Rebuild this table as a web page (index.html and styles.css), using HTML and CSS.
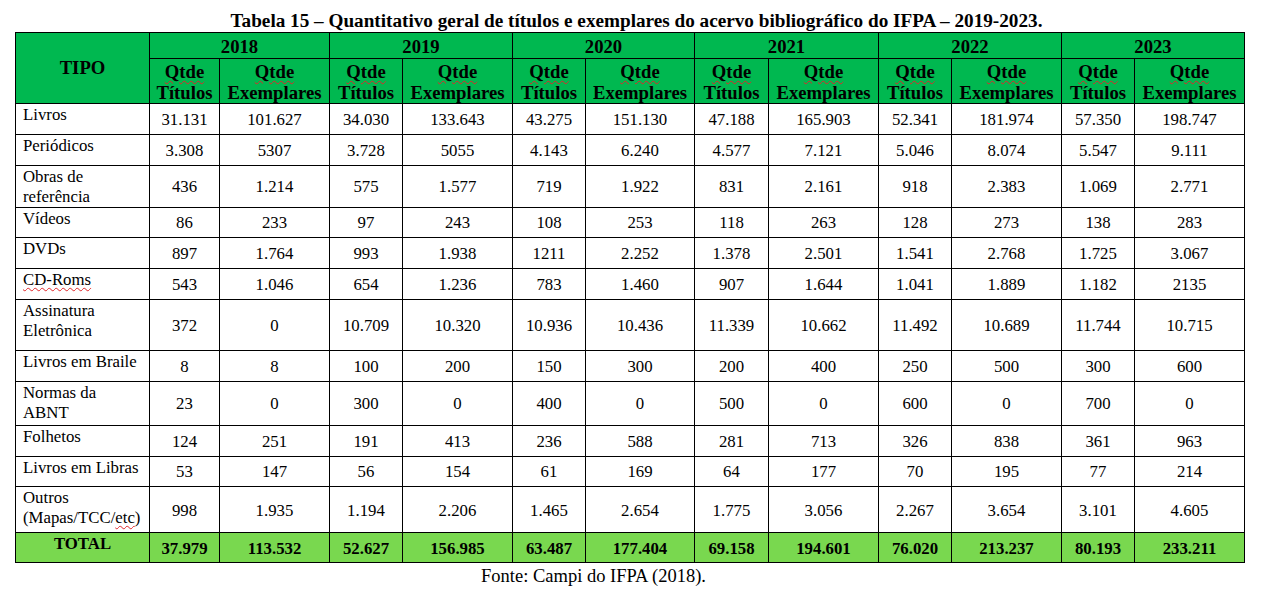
FILE: index.html
```html
<!DOCTYPE html>
<html lang="pt-BR">
<head>
<meta charset="utf-8">
<title>Tabela 15</title>
<link rel="stylesheet" href="styles.css">
</head>
<body>
<div class="page">
  <p class="caption">Tabela 15 – Quantitativo geral de títulos e exemplares do acervo bibliográfico do IFPA – 2019-2023.</p>
  <table class="data">
    <colgroup>
      <col class="c-tipo">
      <col class="c70"><col class="c110">
      <col class="c73"><col class="c110">
      <col class="c73"><col class="c109">
      <col class="c74"><col class="c110">
      <col class="c73"><col class="c110">
      <col class="c73"><col class="c110">
    </colgroup>
    <thead>
      <tr class="h-year">
        <th rowspan="2" class="tipo">TIPO</th>
        <th colspan="2">2018</th>
        <th colspan="2">2019</th>
        <th colspan="2">2020</th>
        <th colspan="2">2021</th>
        <th colspan="2">2022</th>
        <th colspan="2">2023</th>
      </tr>
      <tr class="h-sub">
        <th><span class="sp">Qtde</span><br>Títulos</th><th><span class="sp">Qtde</span><br>Exemplares</th>
        <th><span class="sp">Qtde</span><br>Títulos</th><th><span class="sp">Qtde</span><br>Exemplares</th>
        <th><span class="sp">Qtde</span><br>Títulos</th><th><span class="sp">Qtde</span><br>Exemplares</th>
        <th><span class="sp">Qtde</span><br>Títulos</th><th><span class="sp">Qtde</span><br>Exemplares</th>
        <th><span class="sp">Qtde</span><br>Títulos</th><th><span class="sp">Qtde</span><br>Exemplares</th>
        <th><span class="sp">Qtde</span><br>Títulos</th><th><span class="sp">Qtde</span><br>Exemplares</th>
      </tr>
    </thead>
    <tbody>
      <tr class="h31">
        <td class="name">Livros</td>
        <td>31.131</td><td>101.627</td><td>34.030</td><td>133.643</td><td>43.275</td><td>151.130</td><td>47.188</td><td>165.903</td><td>52.341</td><td>181.974</td><td>57.350</td><td>198.747</td>
      </tr>
      <tr class="h31">
        <td class="name">Periódicos</td>
        <td>3.308</td><td>5307</td><td>3.728</td><td>5055</td><td>4.143</td><td>6.240</td><td>4.577</td><td>7.121</td><td>5.046</td><td>8.074</td><td>5.547</td><td>9.111</td>
      </tr>
      <tr class="h40">
        <td class="name">Obras de referência</td>
        <td>436</td><td>1.214</td><td>575</td><td>1.577</td><td>719</td><td>1.922</td><td>831</td><td>2.161</td><td>918</td><td>2.383</td><td>1.069</td><td>2.771</td>
      </tr>
      <tr class="h31">
        <td class="name">Vídeos</td>
        <td>86</td><td>233</td><td>97</td><td>243</td><td>108</td><td>253</td><td>118</td><td>263</td><td>128</td><td>273</td><td>138</td><td>283</td>
      </tr>
      <tr class="h31">
        <td class="name">DVDs</td>
        <td>897</td><td>1.764</td><td>993</td><td>1.938</td><td>1211</td><td>2.252</td><td>1.378</td><td>2.501</td><td>1.541</td><td>2.768</td><td>1.725</td><td>3.067</td>
      </tr>
      <tr class="h31">
        <td class="name"><span class="sp">CD-Roms</span></td>
        <td>543</td><td>1.046</td><td>654</td><td>1.236</td><td>783</td><td>1.460</td><td>907</td><td>1.644</td><td>1.041</td><td>1.889</td><td>1.182</td><td>2135</td>
      </tr>
      <tr class="h51">
        <td class="name">Assinatura Eletrônica</td>
        <td>372</td><td>0</td><td>10.709</td><td>10.320</td><td>10.936</td><td>10.436</td><td>11.339</td><td>10.662</td><td>11.492</td><td>10.689</td><td>11.744</td><td>10.715</td>
      </tr>
      <tr class="h31">
        <td class="name">Livros em Braile</td>
        <td>8</td><td>8</td><td>100</td><td>200</td><td>150</td><td>300</td><td>200</td><td>400</td><td>250</td><td>500</td><td>300</td><td>600</td>
      </tr>
      <tr class="h44">
        <td class="name">Normas da ABNT</td>
        <td>23</td><td>0</td><td>300</td><td>0</td><td>400</td><td>0</td><td>500</td><td>0</td><td>600</td><td>0</td><td>700</td><td>0</td>
      </tr>
      <tr class="h31">
        <td class="name">Folhetos</td>
        <td>124</td><td>251</td><td>191</td><td>413</td><td>236</td><td>588</td><td>281</td><td>713</td><td>326</td><td>838</td><td>361</td><td>963</td>
      </tr>
      <tr class="h31">
        <td class="name">Livros em Libras</td>
        <td>53</td><td>147</td><td>56</td><td>154</td><td>61</td><td>169</td><td>64</td><td>177</td><td>70</td><td>195</td><td>77</td><td>214</td>
      </tr>
      <tr class="h46">
        <td class="name">Outros (Mapas/TCC/<span class="sp">etc</span>)</td>
        <td>998</td><td>1.935</td><td>1.194</td><td>2.206</td><td>1.465</td><td>2.654</td><td>1.775</td><td>3.056</td><td>2.267</td><td>3.654</td><td>3.101</td><td>4.605</td>
      </tr>
      <tr class="total h30">
        <td class="name">TOTAL</td>
        <td>37.979</td><td>113.532</td><td>52.627</td><td>156.985</td><td>63.487</td><td>177.404</td><td>69.158</td><td>194.601</td><td>76.020</td><td>213.237</td><td>80.193</td><td>233.211</td>
      </tr>
    </tbody>
  </table>
  <p class="source">Fonte: Campi do IFPA (2018).</p>
</div>
</body>
</html>
```
FILE: styles.css
```css
html, body {
  margin: 0;
  padding: 0;
  background: #ffffff;
}

body {
  font-family: "Liberation Serif", "Times New Roman", serif;
  color: #000000;
}

.page {
  padding: 0 0 0 15px;
}

.caption {
  margin: 0;
  height: 32px;
  padding: 10px 0 0 14px;
  box-sizing: border-box;
  width: 1229px;
  text-align: center;
  font-weight: bold;
  font-size: 19.2px;
  line-height: 21px;
}

.data {
  border-collapse: collapse;
  table-layout: fixed;
  width: 1229px;
}

.c-tipo { width: 134px; }
.c70 { width: 70px; }
.c73 { width: 73px; }
.c74 { width: 74px; }
.c109 { width: 109px; }
.c110 { width: 110px; }

.data th,
.data td {
  border: 1px solid #000000;
  padding: 0;
  text-align: center;
  white-space: nowrap;
}

.data thead th {
  background: #00b850;
  font-weight: bold;
  font-size: 18.7px;
  line-height: 21px;
  vertical-align: middle;
}

.h-year th {
  height: 24px;
  padding-top: 1px;
}

.h-sub th {
  height: 42px;
  padding-top: 2px;
}

.data thead th.tipo {
  vertical-align: middle;
  padding: 0 0 2px 0;
}

.sp {
  text-decoration-line: underline;
  text-decoration-style: wavy;
  text-decoration-color: #e0262a;
  text-decoration-thickness: 1px;
  text-underline-offset: 2px;
}

.data tbody td {
  font-size: 16.8px;
  line-height: 20px;
  vertical-align: middle;
  padding-top: 2px;
}

.data tbody td.name {
  text-align: left;
  vertical-align: top;
  white-space: normal;
  padding: 1px 4px 0 7px;
}

.h30 td { height: 27.4px; }
.h31 td { height: 27.8px; }
.h40 td { height: 37.2px; }
.h44 td { height: 41px; }
.h46 td { height: 42.5px; }
.h51 td { height: 48px; }

.total td {
  background: #79d84f;
  font-weight: bold;
  font-size: 18.7px;
}

.data tbody .total td.name {
  text-align: center;
  padding: 1px 0 0 0;
}

.source {
  margin: 0;
  width: 1229px;
  padding: 3px 72px 0 0;
  box-sizing: border-box;
  text-align: center;
  font-size: 18.5px;
  line-height: 21px;
}
```
